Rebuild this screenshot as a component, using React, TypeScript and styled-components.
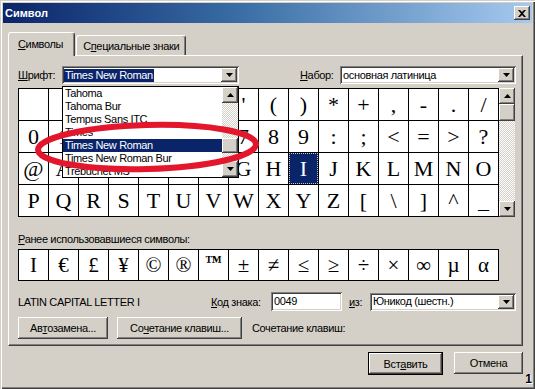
import React from 'react'
import styled, { createGlobalStyle, css } from 'styled-components'

const FACE = '#d4d0c8'
const NAVY = '#0a246a'

const GlobalStyle = createGlobalStyle`
  html, body {
    margin: 0;
    padding: 0;
    background: ${FACE};
  }
  body {
    font-family: "Liberation Sans", Arial, sans-serif;
    font-size: 11px;
    letter-spacing: -0.35px;
    color: #000;
  }
`

const raised = css`
  background: ${FACE};
  box-shadow: inset -1px -1px #404040, inset 1px 1px #fff, inset -2px -2px #808080,
    inset 2px 2px ${FACE};
`

const sunken = css`
  background: #fff;
  box-shadow: inset 1px 1px #808080, inset -1px -1px #fff, inset 2px 2px #404040,
    inset -2px -2px ${FACE};
`

const checker = css`
  background: repeating-conic-gradient(#fff 0 25%, ${FACE} 0 50%) 0 0 / 2px 2px;
`

const gridChars = Array.from({ length: 64 }, (_, i) => String.fromCharCode(0x20 + i))
const recentChars = ['I', '€', '£', '¥', '©', '®', '™', '±', '≠', '≤', '≥', '÷', '×', '∞', 'µ', 'α']
const fonts = [
  'Tahoma',
  'Tahoma Bur',
  'Tempus Sans ITC',
  'Times',
  'Times New Roman',
  'Times New Roman Bur',
  'Trebuchet MS',
]

const Arrow = ({ up }: { up?: boolean }) => (
  <svg width="7" height="4" viewBox="0 0 7 4">
    <polygon points={up ? '3.5,0 7,4 0,4' : '0,0 7,0 3.5,4'} fill="#000" />
  </svg>
)

type ComboProps = { value: string; width: number; highlight?: boolean }

const Combo = (props: ComboProps) => (
  <ComboBox style={{ width: props.width }}>
    <ComboText $highlight={props.highlight}>{props.value}</ComboText>
    <DropButton>
      <Arrow />
    </DropButton>
  </ComboBox>
)

export default function App() {
  return (
    <>
      <GlobalStyle />
      <Window>
        <TitleBar>
          <TitleText>Символ</TitleText>
          <CloseButton>
            <svg width="8" height="7" viewBox="0 0 8 7">
              <path d="M0 0h2l2 2 2-2h2L5 3.5 8 7H6L4 5 2 7H0l3-3.5z" fill="#000" />
            </svg>
          </CloseButton>
        </TitleBar>

        <Body>
          <TabStrip>
            <Tab $active>
              <u>С</u>имволы
            </Tab>
            <Tab>
              С<u>п</u>ециальные знаки
            </Tab>
          </TabStrip>

          <Panel>
            <Row>
              <FieldLabel $width={44}>
                <u>Ш</u>рифт:
              </FieldLabel>
              <PopupAnchor>
                <Combo value="Times New Roman" width={177} highlight />
                <ListPopup>
                  <ListItems>
                    {fonts.map((f) => (
                      <ListItem key={f} $selected={f === 'Times New Roman'}>
                        {f}
                      </ListItem>
                    ))}
                  </ListItems>
                  <VScroll>
                    <ScrollButton>
                      <Arrow up />
                    </ScrollButton>
                    <Track $height={35} />
                    <Thumb $height={15} />
                    <Track />
                    <ScrollButton>
                      <Arrow />
                    </ScrollButton>
                  </VScroll>
                </ListPopup>
              </PopupAnchor>
              <Spacer />
              <FieldLabel $width={40}>
                <u>Н</u>абор:
              </FieldLabel>
              <Combo value="основная латиница" width={176} />
            </Row>

            <GridArea>
              <SymbolGrid>
                {gridChars.map((c, i) => (
                  <Cell key={i} $selected={c === 'I'}>
                    {c}
                  </Cell>
                ))}
              </SymbolGrid>
              <VScroll>
                <ScrollButton>
                  <Arrow up />
                </ScrollButton>
                <Thumb $height={17} />
                <Track />
                <ScrollButton>
                  <Arrow />
                </ScrollButton>
              </VScroll>
            </GridArea>

            <SectionLabel>
              <u>Р</u>анее использовавшиеся символы:
            </SectionLabel>
            <RecentRow>
              {recentChars.map((c, i) => (
                <RecentCell key={i} $small={c === '™'}>
                  {c}
                </RecentCell>
              ))}
            </RecentRow>

            <InfoRow>
              <FieldLabel $width={193}>LATIN CAPITAL LETTER I</FieldLabel>
              <FieldLabel $width={60}>
                <u>К</u>од знака:
              </FieldLabel>
              <TextInput>0049</TextInput>
              <FieldLabel $width={21} $indent={7}>
                <u>и</u>з:
              </FieldLabel>
              <Combo value="Юникод (шестн.)" width={146} />
            </InfoRow>

            <ButtonRow>
              <Button $width={90}>
                Ав<u>т</u>озамена...
              </Button>
              <Button $width={125}>
                Со<u>ч</u>етание клавиш...
              </Button>
              <ShortcutLabel>Сочетание клавиш:</ShortcutLabel>
            </ButtonRow>
          </Panel>

          <DialogButtons>
            <Button $width={75} $default>
              Вст<u>а</u>вить
            </Button>
            <Button $width={69}>Отмена</Button>
          </DialogButtons>
        </Body>

        <Marker
          width="240"
          height="62"
          viewBox="0 0 240 62"
          style={{ left: 29, top: 117 }}
        >
          <ellipse
            cx="118"
            cy="30"
            rx="109"
            ry="22"
            fill="none"
            stroke="#e3162b"
            strokeWidth="6"
            transform="rotate(-1.5 118 30)"
          />
        </Marker>
        <CornerMark>1</CornerMark>
      </Window>
    </>
  )
}

const Window = styled.div`
  position: relative;
  width: 535px;
  height: 389px;
  box-sizing: border-box;
  padding: 3px;
  background: ${FACE};
  box-shadow: inset 1px 1px ${FACE}, inset 2px 2px #fff, inset -1px -1px #404040,
    inset -2px -2px #808080;
  display: flex;
  flex-direction: column;
  overflow: hidden;
`

const TitleBar = styled.div`
  height: 20px;
  display: flex;
  align-items: center;
  justify-content: space-between;
  padding: 0 2px 0 2px;
  background: linear-gradient(90deg, ${NAVY} 0%, #3a6ea5 45%, #a6caf0 100%);
`

const TitleText = styled.span`
  color: #fff;
  font-weight: bold;
  font-size: 11px;
  letter-spacing: 0;
`

const CloseButton = styled.div`
  width: 16px;
  height: 14px;
  ${raised};
  display: flex;
  align-items: center;
  justify-content: center;
`

const Body = styled.div`
  display: flex;
  flex-direction: column;
  padding: 0 9px 0 5px;
`

const TabStrip = styled.div`
  display: flex;
  align-items: flex-end;
  margin-top: 9px;
  height: 23px;
`

const Tab = styled.div<{ $active?: boolean }>`
  position: relative;
  z-index: ${(p) => (p.$active ? 2 : 1)};
  box-sizing: border-box;
  height: ${(p) => (p.$active ? 24 : 20)}px;
  margin-bottom: ${(p) => (p.$active ? -1 : 0)}px;
  padding: ${(p) => (p.$active ? '0 11px 2px 9px' : '0 6px')};
  display: flex;
  align-items: center;
  background: ${FACE};
  border-top: 1px solid #fff;
  border-left: 1px solid #fff;
  border-right: 1px solid #404040;
  box-shadow: inset -1px 0 #808080;
  border-radius: 3px 3px 0 0;
  margin-left: ${(p) => (p.$active ? 0 : 1)}px;
`

const Panel = styled.div`
  position: relative;
  display: flex;
  flex-direction: column;
  height: 291px;
  box-sizing: border-box;
  padding: 10px 6px 0 9px;
  border-top: 1px solid #fff;
  border-left: 1px solid #fff;
  border-right: 1px solid #404040;
  border-bottom: 1px solid #404040;
  box-shadow: inset -1px -1px #808080;
`

const Row = styled.div`
  display: flex;
  align-items: center;
  height: 18px;
`

const Spacer = styled.div`
  flex: 1;
`

const FieldLabel = styled.span<{ $width: number; $indent?: number }>`
  width: ${(p) => p.$width}px;
  margin-left: ${(p) => p.$indent ?? 0}px;
  white-space: nowrap;
  flex-shrink: 0;
`

const PopupAnchor = styled.div`
  position: relative;
  z-index: 5;
`

const ComboBox = styled.div`
  height: 18px;
  box-sizing: border-box;
  ${sunken};
  display: flex;
  align-items: center;
  padding: 2px;
`

const ComboText = styled.span<{ $highlight?: boolean }>`
  flex: 1;
  padding-left: 1px;
  line-height: 13px;
  white-space: nowrap;
  overflow: hidden;

  ${(p) =>
    p.$highlight &&
    css`
      flex: none;
      background: ${NAVY};
      color: #fff;
      padding: 0 1px;
    `}
`

const DropButton = styled.div`
  margin-left: auto;
  width: 16px;
  height: 14px;
  ${raised};
  display: flex;
  align-items: center;
  justify-content: center;
`

const ListPopup = styled.div`
  position: absolute;
  top: 20px;
  left: 0;
  width: 177px;
  height: 92px;
  box-sizing: border-box;
  border: 1px solid #000;
  background: #fff;
  display: flex;
`

const ListItems = styled.div`
  flex: 1;
  display: flex;
  flex-direction: column;
  overflow: hidden;
`

const ListItem = styled.div<{ $selected?: boolean }>`
  height: 13px;
  line-height: 13px;
  padding-left: 2px;
  white-space: nowrap;
  background: ${(p) => (p.$selected ? NAVY : 'transparent')};
  color: ${(p) => (p.$selected ? '#fff' : '#000')};
`

const VScroll = styled.div`
  width: 16px;
  display: flex;
  flex-direction: column;
  ${checker};
`

const ScrollButton = styled.div`
  width: 16px;
  height: 16px;
  flex-shrink: 0;
  ${raised};
  display: flex;
  align-items: center;
  justify-content: center;
`

const Thumb = styled.div<{ $height: number }>`
  height: ${(p) => p.$height}px;
  flex-shrink: 0;
  ${raised};
`

const Track = styled.div<{ $height?: number }>`
  ${(p) => (p.$height ? `height: ${p.$height}px; flex-shrink: 0;` : 'flex: 1;')}
`

const GridArea = styled.div`
  display: flex;
  margin-top: 4px;
`

const SymbolGrid = styled.div`
  display: grid;
  grid-template-columns: repeat(16, 29px);
  grid-template-rows: repeat(4, 31px);
  gap: 1px;
  background: #000;
  border: 1px solid #000;
`

const Cell = styled.div<{ $selected?: boolean }>`
  display: flex;
  align-items: center;
  justify-content: center;
  font-family: "Liberation Serif", "Times New Roman", serif;
  font-size: 22px;
  letter-spacing: 0;
  background: ${(p) => (p.$selected ? NAVY : '#fff')};
  color: ${(p) => (p.$selected ? '#fff' : '#000')};
  outline: ${(p) => (p.$selected ? '1px dotted #c8c8c8' : 'none')};
  outline-offset: -1px;
`

const SectionLabel = styled.div`
  margin-top: 16px;
  height: 13px;
  line-height: 13px;
`

const RecentRow = styled.div`
  display: grid;
  grid-template-columns: repeat(16, 29px);
  grid-template-rows: 30px;
  gap: 1px;
  background: #000;
  border: 1px solid #000;
  width: max-content;
  margin-top: 3px;
`

const RecentCell = styled.div<{ $small?: boolean }>`
  display: flex;
  align-items: center;
  justify-content: center;
  background: #fff;
  font-family: "Liberation Serif", "Times New Roman", serif;
  letter-spacing: 0;
  font-size: ${(p) => (p.$small ? 17 : 21)}px;
  font-weight: ${(p) => (p.$small ? 'bold' : 'normal')};
  padding-bottom: ${(p) => (p.$small ? 6 : 0)}px;
  box-sizing: border-box;
`

const InfoRow = styled.div`
  display: flex;
  align-items: center;
  height: 19px;
  margin-top: 11px;
`

const TextInput = styled.div`
  width: 71px;
  height: 19px;
  box-sizing: border-box;
  ${sunken};
  padding: 3px 3px;
  line-height: 13px;
`

const ButtonRow = styled.div`
  display: flex;
  align-items: center;
  gap: 9px;
  margin-top: 6px;
`

const Button = styled.div<{ $width: number; $default?: boolean }>`
  width: ${(p) => p.$width}px;
  height: ${(p) => (p.$default ? 23 : 22)}px;
  box-sizing: border-box;
  display: flex;
  align-items: center;
  justify-content: center;
  ${raised};
  ${(p) =>
    p.$default &&
    css`
      border: 1px solid #000;
    `}
`

const ShortcutLabel = styled.span`
  margin-left: 1px;
`

const DialogButtons = styled.div`
  display: flex;
  justify-content: flex-end;
  gap: 11px;
  margin-top: 6px;
`

const Marker = styled.svg`
  position: absolute;
  z-index: 10;
  pointer-events: none;
`

const CornerMark = styled.span`
  position: absolute;
  right: 3px;
  bottom: 3px;
  font-weight: bold;
  font-size: 12px;
  letter-spacing: 0;
  color: #000;
  text-shadow: 1px 1px #fff;
`
